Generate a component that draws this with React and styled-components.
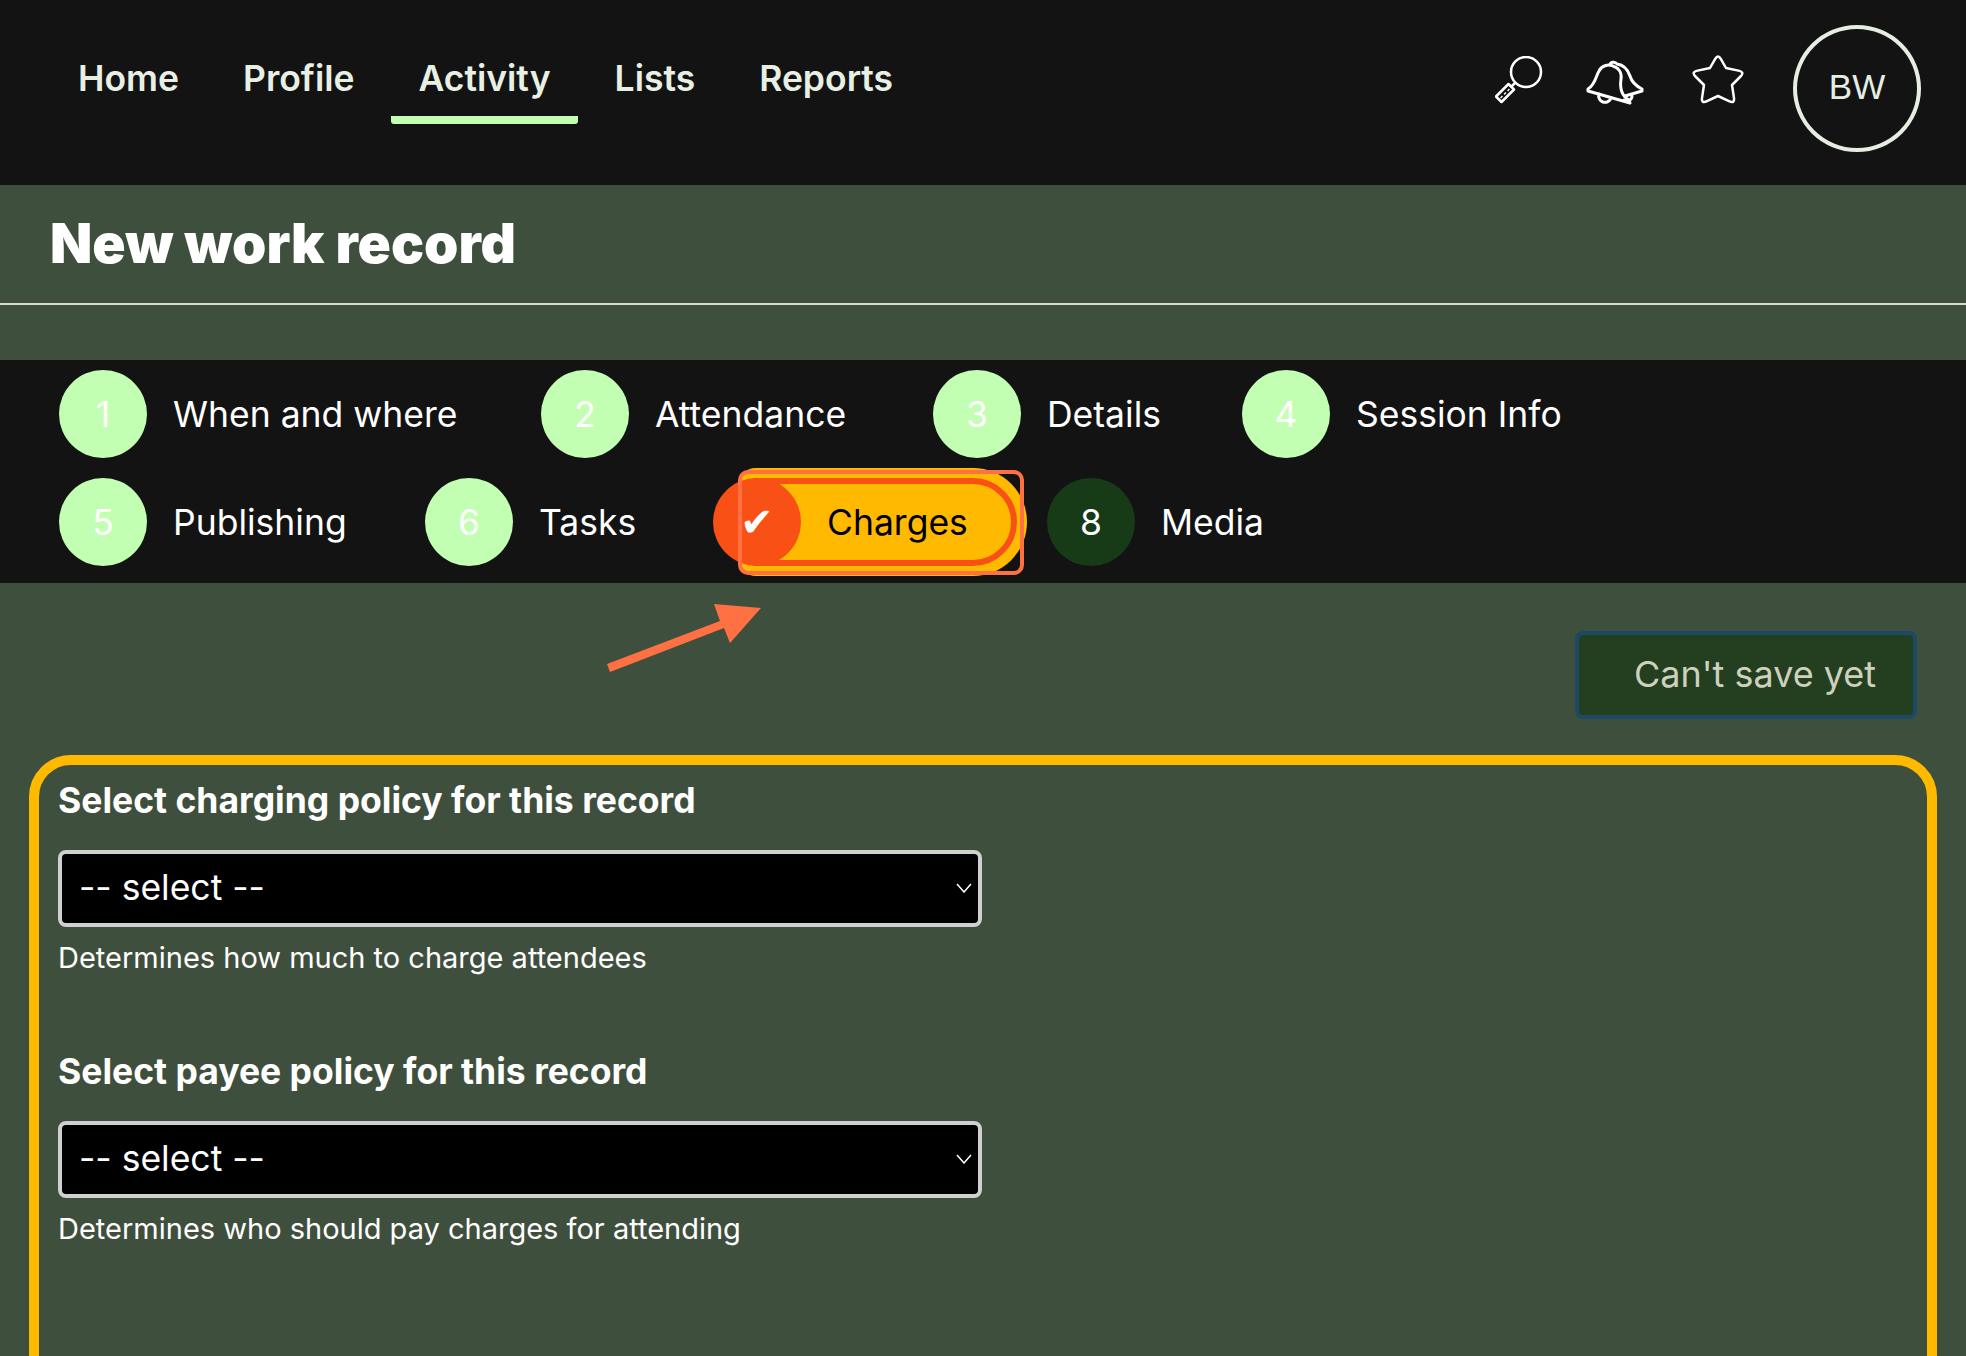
import React from 'react';
import styled, { createGlobalStyle } from 'styled-components';

const GlobalStyle = createGlobalStyle`
  * { box-sizing: border-box; }
  body {
    margin: 0;
    background: #3f4f3d;
    font-family: Inter, "Noto Sans", sans-serif;
  }
`;

const navItems = ['Home', 'Profile', 'Activity', 'Lists', 'Reports'];

const stepRows = [
  [
    { n: '1', label: 'When and where', width: 287 },
    { n: '2', label: 'Attendance', width: 197 },
    { n: '3', label: 'Details', width: 114 },
    { n: '4', label: 'Session Info', width: 206 },
  ],
  [
    { n: '5', label: 'Publishing', width: 171 },
    { n: '6', label: 'Tasks', width: 93 },
    { n: '7', label: 'Charges', width: 140, state: 'active' },
    { n: '8', label: 'Media', width: 100, state: 'todo' },
  ],
];

const SearchIcon = () => (
  <svg width="48" height="48" viewBox="0 0 48 48" fill="none" stroke="#fff" strokeWidth="2.5" strokeLinejoin="round">
    <circle cx="31" cy="16" r="15" />
    <path d="M16 31l5-5" />
    <path d="M1 40.5l5.5 5.5 12.5-12.5-5.5-5.5z" />
    <path d="M6 40.5l1 1M9.500 37l1 1M13 33.500l1 1" strokeWidth="2.5" />
  </svg>
);

const BellIcon = () => (
  <svg width="58" height="48" viewBox="97 6 58 48" fill="none" stroke="#fff" strokeWidth="3" strokeLinejoin="round" strokeLinecap="round">
    <path d="M99 38c7-4 8-13 11-18 3-6 10-7 14-5 6 2 9 7 8 13-1 7-1 16 8 21l1 3L99 40z" />
    <path d="M121 14c0-3 5-4 7-1 7 1 11 6 13 12 2 7 6 10 12 13v2l-17 5" />
    <path d="M110 43a6 6 0 0 0 12 4M135 49c4 2 8 0 8-4" />
  </svg>
);

const StarIcon = () => (
  <svg width="52" height="52" viewBox="231 55 52 52" fill="none" stroke="#fff" strokeWidth="2.5" strokeLinejoin="round">
    <path d="M254.200 60.900Q257 56 259.800 60.900L265 70l12.400 2.600Q284 74 279.500 78.500L271 87l1.900 12.400Q274 106 268 103.200L257 98l-11 5.200Q240 106 241.100 99.400L243 87l-8.500-8.500Q230 74 236.600 72.600L249 70z" />
  </svg>
);

const Chevron = () => (
  <svg width="16" height="10" viewBox="0 0 16 10" fill="none" stroke="#fff" strokeWidth="1.500">
    <path d="M1 1l7 8 7-8" />
  </svg>
);

const PolicyField = ({ label, hint }) => (
  <Field>
    <FieldLabel>{label}</FieldLabel>
    <SelectWrap>
      <Select defaultValue="">
        <option value="">-- select --</option>
      </Select>
      <SelectArrow><Chevron /></SelectArrow>
    </SelectWrap>
    <Hint>{hint}</Hint>
  </Field>
);

const App = () => {
  return (
    <Page>
      <GlobalStyle />
      <Header>
        <Nav>
          {navItems.map((item) => (
            <NavLink key={item} $active={item === 'Activity'}>{item}</NavLink>
          ))}
        </Nav>
        <HeaderRight>
          <SearchSlot><SearchIcon /></SearchSlot>
          <BellSlot><BellIcon /></BellSlot>
          <StarSlot><StarIcon /></StarSlot>
          <Avatar>BW</Avatar>
        </HeaderRight>
      </Header>

      <TitleBar>
        <Title>New work record</Title>
      </TitleBar>

      <Steps>
        {stepRows.map((row) => (
          <StepRow key={row[0].n}>
            {row.map((step) => (
              <Step key={step.n} $active={step.state === 'active'}>
                <StepCircle $state={step.state}>
                  {step.state === 'active' ? <Check>✔</Check> : step.n}
                </StepCircle>
                <StepLabel $active={step.state === 'active'} $width={step.width}>{step.label}</StepLabel>
                {step.state === 'active' && <Highlight />}
              </Step>
            ))}
          </StepRow>
        ))}
      </Steps>

      <Actions>
        <SaveButton disabled>Can't save yet</SaveButton>
      </Actions>

      <Panel>
        <PolicyField
          label="Select charging policy for this record"
          hint="Determines how much to charge attendees"
        />
        <PolicyField
          label="Select payee policy for this record"
          hint="Determines who should pay charges for attending"
        />
      </Panel>

      <Arrow width="170" height="80" viewBox="600 600 170 80">
        <path fill="#ff7043" d="M761 608L714 604 720 621 607 664 610 672 724 628 730 643z" />
      </Arrow>
    </Page>
  );
};

export default App;

const Page = styled.div`
  position: relative;
  height: 1356px;
  overflow: hidden;
  background: #3f4f3d;
`;

const Header = styled.header`
  display: flex;
  justify-content: space-between;
  height: 185px;
  padding: 25px 45px 0 51px;
  background: #131313;
`;

const Nav = styled.nav`
  display: flex;
  gap: 10px;
  padding-top: 32px;
`;

const NavLink = styled.a`
  padding: 0 27px;
  color: #e8f0e4;
  font-size: 35.5px;
  font-weight: 600;
  line-height: 44px;
  &::after {
    content: '';
    display: block;
    height: 8px;
    margin: 15px -27px 0;
    border-radius: 0 0 3px 3px;
    background: ${(p) => (p.$active ? '#c3ffb3' : 'transparent')};
  }
`;

const HeaderRight = styled.div`
  display: flex;
  align-items: flex-start;
`;

const SearchSlot = styled.div`
  margin-top: 31px;
  margin-right: 43px;
`;

const BellSlot = styled.div`
  margin-top: 32px;
  margin-right: 48px;
`;

const StarSlot = styled.div`
  margin-top: 28px;
  margin-right: 49px;
`;

const Avatar = styled.div`
  display: flex;
  align-items: center;
  justify-content: center;
  width: 128px;
  height: 127px;
  padding-bottom: 3px;
  border: 4px solid #e6eee2;
  border-radius: 50%;
  color: #e6eee2;
  font-family: "Liberation Sans", Arial, sans-serif;
  font-size: 35px;
`;

const TitleBar = styled.div`
  display: flex;
  align-items: center;
  height: 120px;
  margin-bottom: 55px;
  padding: 0 0 2px 50px;
  border-bottom: 2px solid #d8d8d8;
`;

const Title = styled.h1`
  margin: 0;
  color: #fff;
  font-size: 55px;
  font-weight: 900;
`;

const Steps = styled.section`
  display: flex;
  flex-direction: column;
  gap: 20px;
  height: 223px;
  padding: 10px 59px 0;
  background: #131313;
`;

const StepRow = styled.div`
  display: flex;
  gap: 31px;
`;

const Step = styled.div`
  position: relative;
  display: flex;
  align-items: center;
  gap: 26px;
  height: 88px;
  padding-right: 50px;
  margin-right: ${(p) => (p.$active ? '-1px' : '0')};
  ${(p) => p.$active && `
    &::before {
      content: '';
      position: absolute;
      top: 0;
      right: 0;
      bottom: 0;
      left: 35px;
      border: 6px solid #f95016;
      border-radius: 8px 44px 44px 8px;
      background: #ffba00;
      box-shadow: 0 0 0 10px #ffba00;
    }
  `}
`;

const circleColors = {
  active: '#f95016',
  todo: '#173a17',
};

const StepCircle = styled.div`
  position: relative;
  display: flex;
  align-items: center;
  justify-content: center;
  width: 88px;
  height: 88px;
  border-radius: 50%;
  background: ${(p) => circleColors[p.$state] || '#c3ffb3'};
  color: #fff;
  font-size: 35.5px;
`;

const Check = styled.span`
  font-family: "DejaVu Sans", sans-serif;
  font-size: 40px;
`;

const StepLabel = styled.span`
  position: relative;
  width: ${(p) => p.$width}px;
  color: ${(p) => (p.$active ? '#000' : '#fff')};
  font-size: 35.5px;
  white-space: nowrap;
`;

const Highlight = styled.div`
  position: absolute;
  top: -8px;
  right: -7px;
  bottom: -9px;
  left: 25px;
  border: 4px solid #ff7043;
  border-radius: 10px;
`;

const Actions = styled.div`
  display: flex;
  justify-content: flex-end;
  padding: 48px 49px 36px 0;
`;

const SaveButton = styled.button`
  width: 342px;
  height: 88px;
  padding: 0 0 2px 55px;
  border: 4px solid #1a4a66;
  border-radius: 8px;
  background: #233f20;
  color: #cdd1bd;
  font-family: inherit;
  font-size: 36px;
  text-align: left;
`;

const Panel = styled.section`
  display: flex;
  flex-direction: column;
  gap: 76px;
  height: 800px;
  margin: 0 29px;
  padding: 16px 19px;
  border: 10px solid #ffba00;
  border-radius: 42px;
`;

const Field = styled.div`
  display: flex;
  flex-direction: column;
`;

const FieldLabel = styled.label`
  margin-bottom: 29px;
  color: #fff;
  font-size: 35.5px;
  font-weight: 700;
  line-height: 40px;
`;

const SelectWrap = styled.div`
  position: relative;
  width: 924px;
`;

const Select = styled.select`
  display: block;
  width: 100%;
  height: 77px;
  padding: 0 0 3px 17px;
  border: 4px solid #d0d0d0;
  border-radius: 8px;
  appearance: none;
  background: #000;
  color: #fff;
  font-family: inherit;
  font-size: 35.5px;
`;

const SelectArrow = styled.span`
  position: absolute;
  top: 33px;
  right: 10px;
  display: flex;
  pointer-events: none;
`;

const Hint = styled.p`
  margin: 13px 0 0;
  color: #fff;
  font-size: 29px;
  line-height: 36px;
`;

const Arrow = styled.svg`
  position: absolute;
  top: 600px;
  left: 600px;
`;
